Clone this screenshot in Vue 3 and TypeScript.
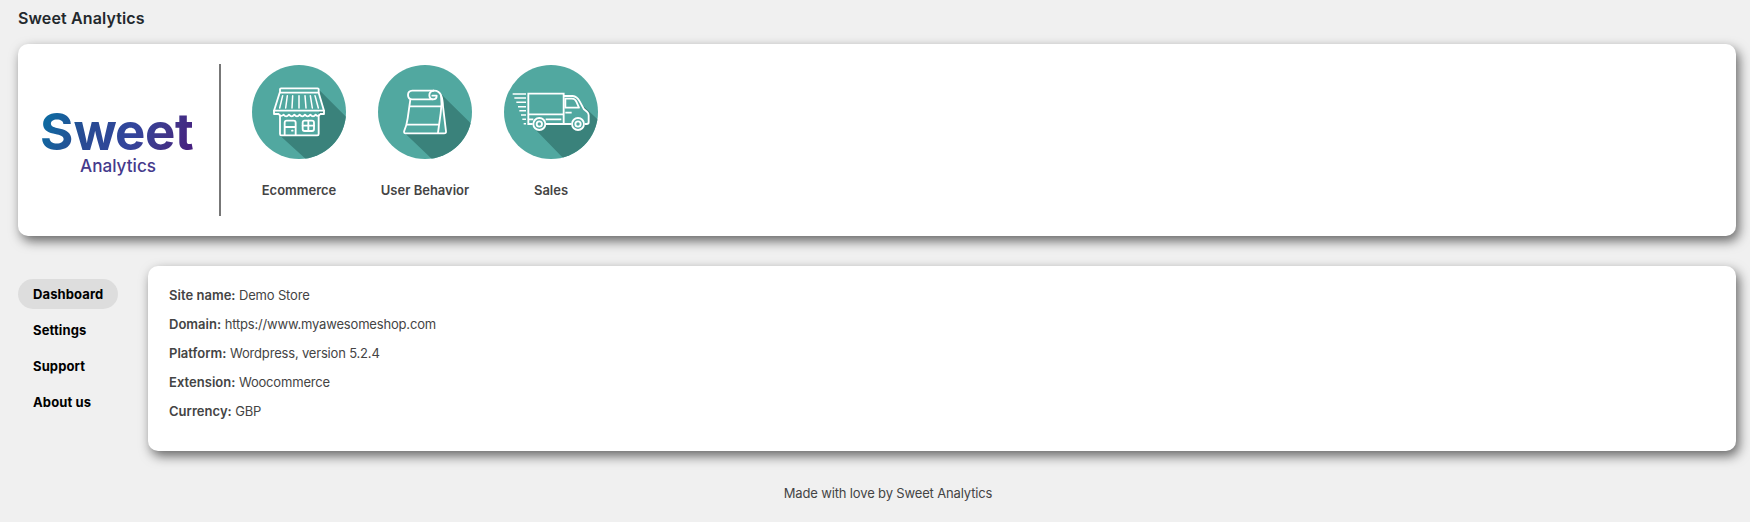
<script setup lang="ts">
import { ref } from 'vue'

interface Detail {
  label: string
  value: string
}

const menu: string[] = ['Dashboard', 'Settings', 'Support', 'About us']
const active = ref<string>('Dashboard')

const details: Detail[] = [
  { label: 'Site name:', value: 'Demo Store' },
  { label: 'Domain:', value: 'https://www.myawesomeshop.com' },
  { label: 'Platform:', value: 'Wordpress, version 5.2.4' },
  { label: 'Extension:', value: 'Woocommerce' },
  { label: 'Currency:', value: 'GBP' },
]
</script>

<template>
  <div class="page">
    <h1 class="title">Sweet Analytics</h1>

    <header class="card banner">
      <div class="brand">
        <svg class="logo" width="160" height="80" viewBox="0 0 160 80" role="img" aria-label="Sweet Analytics">
          <defs>
            <linearGradient id="brandFill" gradientUnits="userSpaceOnUse" x1="8" y1="0" x2="152" y2="66">
              <stop offset="0" stop-color="#0a6fa3" />
              <stop offset="0.3" stop-color="#284b93" />
              <stop offset="0.58" stop-color="#33459c" />
              <stop offset="0.76" stop-color="#40378a" />
              <stop offset="1" stop-color="#471a7d" />
            </linearGradient>
          </defs>
          <text class="logo-main" x="1 34.5 76 106 136" y="50" fill="url(#brandFill)">Sweet</text>
          <text class="logo-sub" x="41" y="71.5" textLength="76" lengthAdjust="spacingAndGlyphs" fill="#453a8c">Analytics</text>
        </svg>
      </div>

      <nav class="reports">
        <a class="report">
          <svg class="badge" viewBox="21 21 282 282">
            <defs><clipPath id="clipShop"><circle cx="162" cy="162" r="141" /></clipPath></defs>
            <circle cx="162" cy="162" r="141" fill="#51a8a0" />
            <path clip-path="url(#clipShop)" d="M222 95L322 195V330H212L104 232L222 232Z" fill="#3a827b" />
            <path d="M105 103L88 158H237L220 103Z" fill="#51a8a0" />
            <path d="M105 170H220V232H105Z" fill="#51a8a0" />
            <g fill="none" stroke="#fff" stroke-width="5.5" stroke-linejoin="round" stroke-linecap="round">
              <path d="M105 103V94Q105 91 108 91H218Q221 91 221 94V103" />
              <path d="M104 104H221L237 158H87Z" />
              <path d="M87 158V168H101Q107 178 116 170Q123 180 132 170Q140 180 148 170Q156 180 164 170Q172 180 180 170Q188 180 196 170Q204 180 212 170Q219 178 226 168H237V158" />
              <path d="M105 172V228Q105 232 109 232H217Q221 232 221 228V172" />
              <path d="M119 230V194Q119 188 125 188H146Q152 188 152 194V230M120 207H151M141 218H143" />
              <rect x="173" y="188" width="34" height="31" rx="6" />
              <path d="M190 188V219M173 203H207" />
            </g>
            <path d="M113 113L104 150M127 113L122 150M143 113L141 150M162 113V150M180 113L183 150M196 113L202 150M210 113L220 150" fill="none" stroke="#fff" stroke-width="4.5" stroke-linecap="round" />
          </svg>
          <span>Ecommerce</span>
        </a>

        <a class="report">
          <svg class="badge" viewBox="24 21 282 282">
            <defs><clipPath id="clipBag"><circle cx="165" cy="162" r="141" /></clipPath></defs>
            <circle cx="165" cy="162" r="141" fill="#51a8a0" />
            <path clip-path="url(#clipBag)" d="M213 108L325 218V330H214L104 225L228 225Z" fill="#3a827b" />
            <path d="M121 122L102 221L106 226H228L215 116L200 98L180 122Z" fill="#51a8a0" />
            <g fill="none" stroke="#fff" stroke-width="5.5" stroke-linejoin="round" stroke-linecap="round">
              <path d="M190 98H127Q114 99 114 111Q114 124 127 124H188" />
              <path d="M190 98Q178 101 178 112Q178 124 189 124Q200 124 200 113H187" />
              <path d="M190 98Q208 97 214 114Q218 123 219 145L228 220Q229 226 222 226H108Q100 226 103 218Q110 202 113 181L121 125" />
              <path d="M213 112Q217 139 212 166L204 224M121 145H214M113 200H207" />
            </g>
          </svg>
          <span>User Behavior</span>
        </a>

        <a class="report">
          <svg class="badge" viewBox="24 21 282 282">
            <defs><clipPath id="clipTruck"><circle cx="165" cy="162" r="141" /></clipPath></defs>
            <circle cx="165" cy="162" r="141" fill="#51a8a0" />
            <path clip-path="url(#clipTruck)" d="M262 144L330 208V340H240L116 212L120 198H278Z" fill="#3a827b" />
            <path d="M97 107H203V114H232Q244 116 252 131L263 154L277 166V199H97Z" fill="#51a8a0" />
            <g fill="none" stroke="#fff" stroke-width="5.5">
              <path d="M50 108H90M55 120H90M61 133H90M66 146H90M70 158H90M75 171H90M79 184H90M83 197H90" stroke-width="4.5" />
              <path d="M110 198H97V107H203V195M97 169H203M97 184H112M149 184H196" />
              <path d="M203 114H230Q243 115 251 130L264 154L273 161Q278 165 278 172V193Q278 198 272 198H267M226 198H203M148 198H203" stroke-linejoin="round" />
              <path d="M208 122H228Q237 122 241 131L249 149H208ZM208 164H227" stroke-linejoin="round" />
            </g>
            <g fill="#51a8a0" stroke="#fff" stroke-width="5.5">
              <circle cx="130" cy="198" r="18" />
              <circle cx="130" cy="198" r="8" />
              <circle cx="246" cy="198" r="18" />
              <circle cx="246" cy="198" r="8" />
            </g>
          </svg>
          <span>Sales</span>
        </a>
      </nav>
    </header>

    <main class="body">
      <nav class="menu">
        <button
          v-for="item in menu"
          :key="item"
          class="menu-item"
          :class="{ active: item === active }"
          @click="active = item"
        >{{ item }}</button>
      </nav>

      <section class="card details">
        <p v-for="row in details" :key="row.label"><strong>{{ row.label }}</strong> {{ row.value }}</p>
      </section>
    </main>

    <footer class="footer">Made with love by Sweet Analytics</footer>
  </div>
</template>

<style>
html,
body {
  margin: 0;
  background: #f0f0f0;
  overflow: hidden;
}
</style>

<style scoped>
.page {
  box-sizing: border-box;
  height: 522px;
  padding: 0 14px 0 18px;
  font-family: Inter, "Liberation Sans", sans-serif;
  font-size: 13px;
  line-height: 19px;
  color: #444;
}
.title {
  margin: 0;
  height: 44px;
  line-height: 36px;
  font-size: 16px;
  font-weight: 600;
  letter-spacing: 0.13px;
  color: #23282d;
}
.card {
  background: #fff;
  border-radius: 10px;
  box-shadow: 3px 5px 12px rgba(0, 0, 0, 0.58);
}
.banner {
  box-sizing: border-box;
  height: 192px;
  padding: 20px 0;
  display: flex;
}
.brand {
  box-sizing: border-box;
  width: 203px;
  height: 152px;
  border-right: 2px solid #777;
  padding: 36px 0 0 21px;
}
.logo {
  display: block;
}
.logo-main {
  font-size: 51px;
  font-weight: 700;
}
.logo-sub {
  font-size: 17.5px;
  font-weight: 500;
}
.reports {
  display: flex;
  gap: 32px;
  padding: 1px 0 0 31px;
}
.report {
  width: 94px;
  display: flex;
  flex-direction: column;
  align-items: center;
  gap: 22px;
  font-weight: 600;
  white-space: nowrap;
}
.badge {
  display: block;
  width: 94px;
  height: 94px;
}
.body {
  display: flex;
  margin-top: 30px;
}
.menu {
  width: 130px;
  padding-top: 13px;
  display: flex;
  flex-direction: column;
  align-items: flex-start;
  gap: 6px;
}
.menu-item {
  height: 30px;
  padding: 0 15px;
  border: 0;
  border-radius: 15px;
  background: transparent;
  font: 700 13px/30px Inter, "Liberation Sans", sans-serif;
  letter-spacing: 0.12px;
  color: #000;
}
.menu-item.active {
  background: #ddd;
}
.details {
  box-sizing: border-box;
  flex: 1;
  height: 185px;
  padding: 20px 21px;
}
.details p {
  margin: 0 0 10px;
  letter-spacing: -0.18px;
}
.details strong {
  font-weight: 600;
  letter-spacing: 0.03px;
}
.footer {
  margin-top: 33px;
  text-align: center;
  padding-left: 22px;
  letter-spacing: -0.15px;
}
</style>
